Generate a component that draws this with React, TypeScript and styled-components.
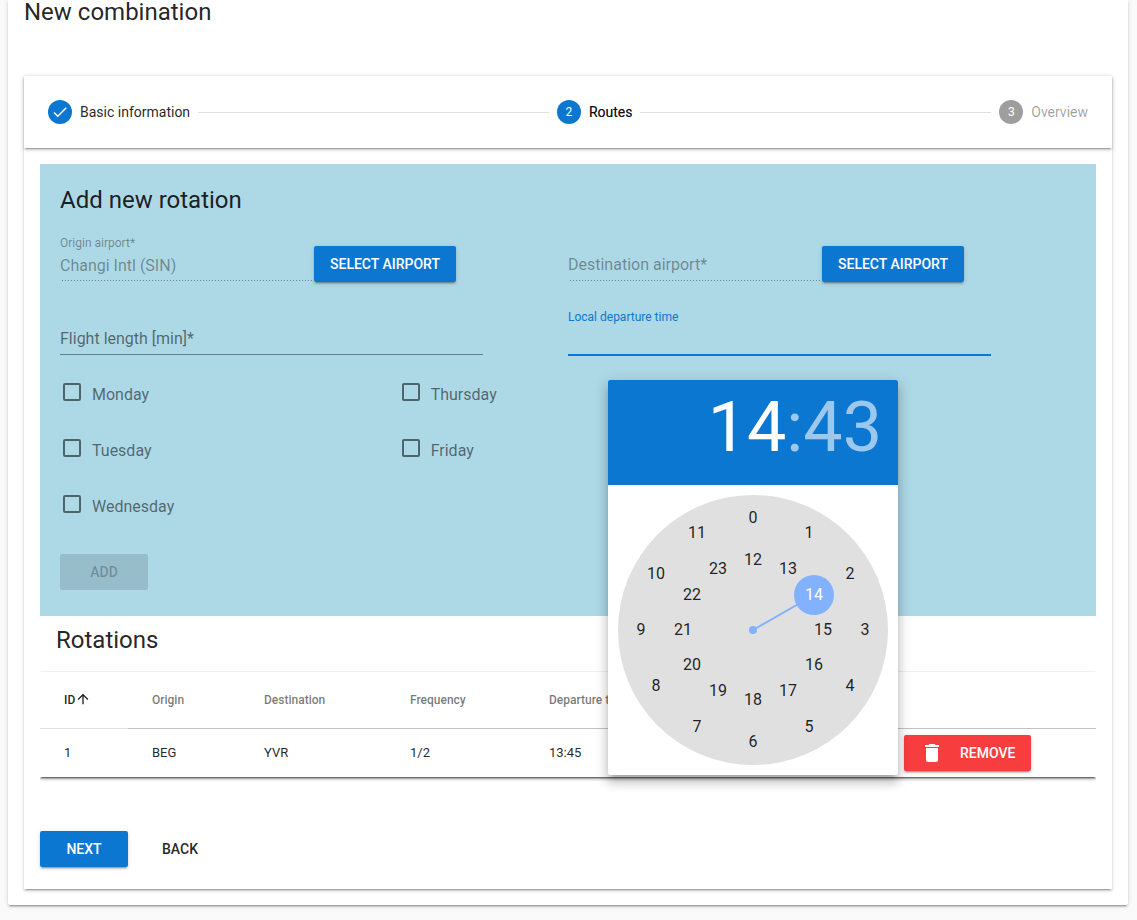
import React, { useState } from 'react';
import styled, { createGlobalStyle, ThemeProvider, css } from 'styled-components';

const theme = {
  primary: '#0b77d1',
  danger: '#f83d3f',
  accent: '#82b1ff',
  text: 'rgba(0, 0, 0, 0.87)',
  muted: 'rgba(0, 0, 0, 0.54)',
  disabled: 'rgba(0, 0, 0, 0.38)',
  divider: 'rgba(0, 0, 0, 0.12)',
  panel: 'lightblue',
  raised:
    '0 3px 1px -2px rgba(0, 0, 0, 0.2), 0 2px 2px 0 rgba(0, 0, 0, 0.14), 0 1px 5px 0 rgba(0, 0, 0, 0.12)',
};

const GlobalStyle = createGlobalStyle`
  *, *::before, *::after { box-sizing: border-box; }
  body {
    margin: 0;
    background: #fafafa;
    color: rgba(0, 0, 0, 0.87);
    font-family: Roboto, sans-serif;
    font-size: 14px;
    line-height: 20px;
  }
  button, input { font: inherit; color: inherit; }
`;

const Page = styled.main`
  padding: 0 9px 15px 8px;
`;

const Card = styled.section`
  padding: 0 16px 16px;
  background: #fff;
  border-radius: 0 0 2px 2px;
  box-shadow: ${(p) => p.theme.raised};
`;

const Title = styled.h1`
  margin: 0 0 52px;
  font-size: 24px;
  font-weight: 400;
  line-height: 24px;
`;

const Heading = styled.h2`
  margin: 0;
  font-size: 24px;
  font-weight: 400;
  line-height: 32px;
`;

const Stepper = styled.div`
  background: #fff;
  box-shadow: ${(p) => p.theme.raised};
`;

const StepperHeader = styled.ol`
  display: flex;
  align-items: center;
  gap: 8px;
  height: 72px;
  margin: 0;
  padding: 0 24px;
  list-style: none;
  box-shadow: ${(p) => p.theme.raised};
`;

const Step = styled.li<{ $state: 'done' | 'current' | 'todo' }>`
  display: flex;
  align-items: center;
  gap: 8px;
  color: ${(p) => (p.$state === 'todo' ? p.theme.disabled : p.theme.text)};
  text-shadow: ${(p) => (p.$state === 'current' ? '0 0 0 rgba(0, 0, 0, 0.6)' : 'none')};
`;

const StepBadge = styled.span<{ $active: boolean }>`
  display: flex;
  align-items: center;
  justify-content: center;
  width: 24px;
  height: 24px;
  border-radius: 50%;
  background: ${(p) => (p.$active ? p.theme.primary : 'rgba(0, 0, 0, 0.38)')};
  color: #fff;
  font-size: 12px;
  text-shadow: none;
`;

const StepLine = styled.li`
  flex: 1;
  height: 1px;
  background: ${(p) => p.theme.divider};
`;

const StepContent = styled.div`
  padding: 16px 16px 22px;
`;

const Panel = styled.form`
  padding: 20px 20px 26px;
  background: ${(p) => p.theme.panel};
`;

const Row = styled.div`
  display: grid;
  grid-template-columns: repeat(12, 1fr);
  align-items: start;
`;

const FieldRows = styled.div`
  display: grid;
  gap: 28px;
  margin: 20px 0 24px;
`;

const Cell = styled.div<{ $span: number; $start?: number }>`
  position: relative;
  min-width: 0;
  grid-column: ${(p) => (p.$start ? `${p.$start} / ` : '')} span ${(p) => p.$span};
`;

const Field = styled.div<{ $variant: 'disabled' | 'plain' | 'focused' }>`
  display: grid;
  height: 46px;
  padding-bottom: 1px;
  color: ${(p) => (p.$variant === 'disabled' ? p.theme.disabled : p.theme.text)};
  background: no-repeat left bottom 1px / 100% 1px
    linear-gradient(rgba(0, 0, 0, 0.42), rgba(0, 0, 0, 0.42));
  ${(p) =>
    p.$variant === 'disabled' &&
    css`
      background: left 2px bottom 1px / 3px 1px repeat-x
        linear-gradient(to right, rgba(0, 0, 0, 0.38) 1px, transparent 1px);
    `}
  ${(p) =>
    p.$variant === 'focused' &&
    css`
      background: no-repeat left bottom / 100% 2px
        linear-gradient(${p.theme.primary}, ${p.theme.primary});
    `}
`;

const FieldLabel = styled.label<{ $floating?: boolean; $tone: 'disabled' | 'muted' | 'primary' }>`
  grid-area: 1 / 1;
  color: ${(p) => (p.$tone === 'primary' ? p.theme.primary : p.$tone === 'muted' ? p.theme.muted : p.theme.disabled)};
  font-size: ${(p) => (p.$floating ? '12px' : '16px')};
  line-height: ${(p) => (p.$floating ? '14px' : '24px')};
  padding-top: ${(p) => (p.$floating ? '0' : '17px')};
  pointer-events: none;
`;

const FieldInput = styled.input`
  grid-area: 1 / 1;
  width: 100%;
  height: 24px;
  margin-top: 18px;
  padding: 0;
  border: 0;
  outline: 0;
  background: transparent;
  font-size: 16px;
  line-height: 24px;
`;

const Button = styled.button<{ $color?: 'primary' | 'danger' }>`
  display: inline-flex;
  align-items: center;
  justify-content: center;
  gap: 16px;
  min-width: 88px;
  height: 36px;
  padding: 0 16px;
  border: 0;
  border-radius: 2px;
  background: transparent;
  font-size: 14px;
  font-weight: 500;
  text-transform: uppercase;
  white-space: nowrap;
  cursor: pointer;
  ${(p) =>
    p.$color &&
    css`
      background: ${p.theme[p.$color]};
      color: #fff;
      box-shadow: ${p.theme.raised};
    `}
  &:disabled {
    background: rgba(0, 0, 0, 0.12);
    color: rgba(0, 0, 0, 0.26);
    box-shadow: none;
    cursor: default;
  }
`;

const FieldAction = styled(Cell)`
  padding-top: 10px;
`;

const Days = styled.div`
  display: grid;
  gap: 32px;
`;

const DayRow = styled.div`
  display: flex;
  gap: 8px;
  height: 24px;
`;

const Checkbox = styled.input`
  appearance: none;
  width: 18px;
  height: 18px;
  margin: 3px;
  border: 2px solid ${(p) => p.theme.muted};
  border-radius: 2px;
  &:checked {
    border-color: ${(p) => p.theme.primary};
    background: ${(p) => p.theme.primary};
  }
`;

const DayLabel = styled.label`
  color: ${(p) => p.theme.muted};
  font-size: 16px;
  line-height: 30px;
`;

const PanelActions = styled.div`
  display: flex;
  margin-top: 38px;
`;

const Picker = styled.div`
  position: absolute;
  z-index: 2;
  top: 70px;
  left: 40px;
  width: 290px;
  border-radius: 2px;
  overflow: hidden;
  background: #fff;
  box-shadow: 0 5px 5px -3px rgba(0, 0, 0, 0.2), 0 8px 10px 1px rgba(0, 0, 0, 0.14),
    0 3px 14px 2px rgba(0, 0, 0, 0.12);
`;

const PickerTitle = styled.div`
  display: flex;
  justify-content: flex-end;
  align-items: flex-start;
  height: 105px;
  padding: 12px 16px;
  background: ${(p) => p.theme.primary};
  color: rgba(255, 255, 255, 0.6);
  font-size: 70px;
  line-height: 70px;
`;

const PickerUnit = styled.button<{ $active?: boolean }>`
  padding: 0;
  border: 0;
  background: transparent;
  color: ${(p) => (p.$active ? '#fff' : 'inherit')};
  line-height: 70px;
  cursor: pointer;
`;

const Clock = styled.div`
  position: relative;
  width: 270px;
  height: 270px;
  margin: 10px;
  border-radius: 50%;
  background: #e0e0e0;
`;

const ClockHand = styled.svg`
  display: block;
  color: ${(p) => p.theme.accent};
`;

const Hour = styled.button<{ $active: boolean }>`
  position: absolute;
  width: 40px;
  height: 40px;
  margin: -20px;
  padding: 0;
  border: 0;
  border-radius: 50%;
  background: ${(p) => (p.$active ? p.theme.accent : 'transparent')};
  color: ${(p) => (p.$active ? '#fff' : p.theme.text)};
  font-size: 16px;
  line-height: 40px;
  cursor: pointer;
`;

const TableHeading = styled(Heading)`
  padding: 8px 16px 16px;
`;

const TableWrap = styled.div`
  box-shadow: ${(p) => p.theme.raised}, ${(p) => p.theme.raised};
  clip-path: inset(-1px 0 -5px 0);
`;

const Table = styled.table`
  width: 100%;
  table-layout: fixed;
  border-collapse: separate;
  border-spacing: 0;
  background: #fff;
`;

const Th = styled.th<{ $sorted?: boolean; $width?: number }>`
  width: ${(p) => (p.$width ? `${p.$width}px` : 'auto')};
  height: 57px;
  padding: 0 24px;
  border-bottom: 1px solid ${(p) => (p.$sorted ? 'rgba(0, 0, 0, 0.12)' : 'rgba(0, 0, 0, 0.24)')};
  color: ${(p) => (p.$sorted ? p.theme.text : p.theme.muted)};
  font-size: 12px;
  font-weight: 500;
  text-align: left;
  white-space: nowrap;
`;

const SortIcon = styled.svg`
  vertical-align: -3px;
`;

const Td = styled.td`
  height: 48px;
  padding: 0 24px;
  font-size: 13px;
`;

const Footer = styled.div`
  display: flex;
  gap: 8px;
  margin-top: 54px;
`;

const CheckIcon = () => (
  <svg width="18" height="18" viewBox="0 0 24 24" fill="currentColor" aria-hidden="true">
    <path d="M9 16.17L4.83 12l-1.42 1.41L9 19 21 7l-1.41-1.41z" />
  </svg>
);

const DeleteIcon = () => (
  <svg width="24" height="24" viewBox="0 0 24 24" fill="currentColor" aria-hidden="true">
    <path d="M6 19c0 1.1.9 2 2 2h8c1.1 0 2-.9 2-2V7H6v12zM19 4h-3.5l-1-1h-5l-1 1H5v2h14V4z" />
  </svg>
);

const dayColumns = [
  ['Monday', 'Tuesday', 'Wednesday'],
  ['Thursday', 'Friday'],
];

const columns = [
  { label: 'Origin', width: 112 },
  { label: 'Destination', width: 146 },
  { label: 'Frequency', width: 139 },
  { label: 'Departure time', width: 355 },
];

const rotations = [{ id: 1, origin: 'BEG', destination: 'YVR', frequency: '1/2', departure: '13:45' }];

const CENTER = 135;

const hourPosition = (hour: number) => {
  const radius = hour < 12 ? 112 : 70;
  const angle = (hour % 12) * (Math.PI / 6);
  return {
    left: Math.round(CENTER + radius * Math.sin(angle)),
    top: Math.round(CENTER - radius * Math.cos(angle)),
  };
};

function TimePicker() {
  const [hour, setHour] = useState(14);
  const tip = hourPosition(hour);
  return (
    <Picker role="dialog" aria-label="Pick a time">
      <PickerTitle>
        <PickerUnit type="button" $active>
          {hour}
        </PickerUnit>
        <span>:</span>
        <PickerUnit type="button">43</PickerUnit>
      </PickerTitle>
      <Clock>
        <ClockHand width="270" height="270" viewBox="0 0 270 270" aria-hidden="true">
          <line x1={CENTER} y1={CENTER} x2={tip.left} y2={tip.top} stroke="currentColor" strokeWidth="2" />
          <circle cx={CENTER} cy={CENTER} r="4" fill="currentColor" />
        </ClockHand>
        {Array.from({ length: 24 }, (_, h) => (
          <Hour key={h} type="button" $active={h === hour} style={hourPosition(h)} onClick={() => setHour(h)}>
            {h}
          </Hour>
        ))}
      </Clock>
    </Picker>
  );
}

export default function App() {
  return (
    <ThemeProvider theme={theme}>
      <GlobalStyle />
      <Page>
        <Card>
          <Title>New combination</Title>
          <Stepper>
            <StepperHeader>
              <Step $state="done">
                <StepBadge $active>
                  <CheckIcon />
                </StepBadge>
                Basic information
              </Step>
              <StepLine aria-hidden="true" />
              <Step $state="current">
                <StepBadge $active>2</StepBadge>
                Routes
              </Step>
              <StepLine aria-hidden="true" />
              <Step $state="todo">
                <StepBadge $active={false}>3</StepBadge>
                Overview
              </Step>
            </StepperHeader>
            <StepContent>
              <Panel>
                <Heading>Add new rotation</Heading>
                <FieldRows>
                  <Row>
                    <Cell $span={3}>
                      <Field $variant="disabled">
                        <FieldLabel htmlFor="origin" $floating $tone="disabled">
                          Origin airport*
                        </FieldLabel>
                        <FieldInput id="origin" type="text" defaultValue="Changi Intl (SIN)" disabled />
                      </Field>
                    </Cell>
                    <FieldAction $span={3}>
                      <Button type="button" $color="primary">
                        Select airport
                      </Button>
                    </FieldAction>
                    <Cell $span={3}>
                      <Field $variant="disabled">
                        <FieldLabel htmlFor="destination" $tone="disabled">
                          Destination airport*
                        </FieldLabel>
                        <FieldInput id="destination" type="text" disabled />
                      </Field>
                    </Cell>
                    <FieldAction $span={3}>
                      <Button type="button" $color="primary">
                        Select airport
                      </Button>
                    </FieldAction>
                  </Row>
                  <Row>
                    <Cell $span={5}>
                      <Field $variant="plain">
                        <FieldLabel htmlFor="length" $tone="muted">
                          Flight length [min]*
                        </FieldLabel>
                        <FieldInput id="length" type="text" />
                      </Field>
                    </Cell>
                    <Cell $span={5} $start={7}>
                      <Field $variant="focused">
                        <FieldLabel htmlFor="departure" $floating $tone="primary">
                          Local departure time
                        </FieldLabel>
                        <FieldInput id="departure" type="text" readOnly />
                      </Field>
                      <TimePicker />
                    </Cell>
                  </Row>
                </FieldRows>
                <Row>
                  {dayColumns.map((days) => (
                    <Cell key={days[0]} $span={4}>
                      <Days>
                        {days.map((day) => (
                          <DayRow key={day}>
                            <Checkbox type="checkbox" id={day} />
                            <DayLabel htmlFor={day}>{day}</DayLabel>
                          </DayRow>
                        ))}
                      </Days>
                    </Cell>
                  ))}
                </Row>
                <PanelActions>
                  <Button type="submit" disabled>
                    Add
                  </Button>
                </PanelActions>
              </Panel>
              <TableHeading>Rotations</TableHeading>
              <TableWrap>
                <Table>
                  <thead>
                    <tr>
                      <Th $sorted $width={88} aria-sort="ascending">
                        ID
                        <SortIcon width="16" height="16" viewBox="0 0 24 24" fill="currentColor" aria-hidden="true">
                          <path d="M4 12l1.41 1.41L11 7.83V20h2V7.83l5.58 5.59L20 12l-8-8-8 8z" />
                        </SortIcon>
                      </Th>
                      {columns.map((c) => (
                        <Th key={c.label} $width={c.width}>
                          {c.label}
                        </Th>
                      ))}
                      <Th />
                    </tr>
                  </thead>
                  <tbody>
                    {rotations.map((r) => (
                      <tr key={r.id}>
                        <Td>{r.id}</Td>
                        <Td>{r.origin}</Td>
                        <Td>{r.destination}</Td>
                        <Td>{r.frequency}</Td>
                        <Td>{r.departure}</Td>
                        <Td>
                          <Button type="button" $color="danger">
                            <DeleteIcon />
                            Remove
                          </Button>
                        </Td>
                      </tr>
                    ))}
                  </tbody>
                </Table>
              </TableWrap>
              <Footer>
                <Button type="button" $color="primary">
                  Next
                </Button>
                <Button type="button">Back</Button>
              </Footer>
            </StepContent>
          </Stepper>
        </Card>
      </Page>
    </ThemeProvider>
  );
}
